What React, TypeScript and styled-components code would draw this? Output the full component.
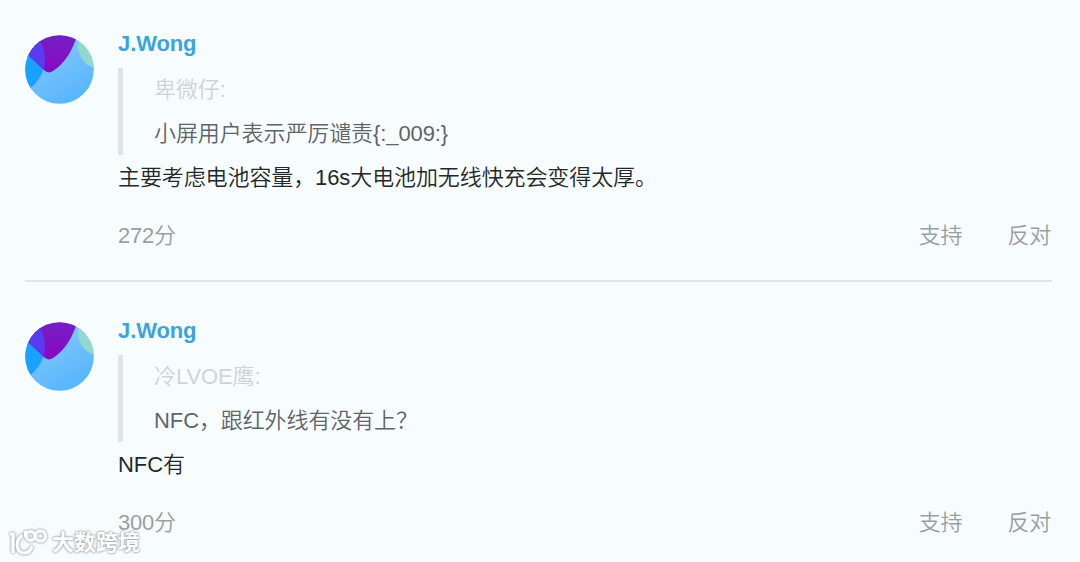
import React from "react";
import styled, { createGlobalStyle } from "styled-components";

interface Comment {
  id: number;
  author: string;
  quoteAuthor: string;
  quoteText: string;
  text: string;
  score: number;
}

const comments: Comment[] = [
  {
    id: 1,
    author: "J.Wong",
    quoteAuthor: "卑微仔",
    quoteText: "小屏用户表示严厉谴责{:_009:}",
    text: "主要考虑电池容量，16s大电池加无线快充会变得太厚。",
    score: 272,
  },
  {
    id: 2,
    author: "J.Wong",
    quoteAuthor: "冷LVOE鹰",
    quoteText: "NFC，跟红外线有没有上？",
    text: "NFC有",
    score: 300,
  },
];

const GlobalStyle = createGlobalStyle`
  * {
    box-sizing: border-box;
  }

  body {
    margin: 0;
    background: #f7fdff;
    font-family: "Liberation Sans", "Noto Sans CJK SC", sans-serif;
    font-size: 22px;
    line-height: 44px;
  }
`;

const Page = styled.main`
  position: relative;
  height: 562px;
  padding: 0 28px 0 25px;
  overflow: hidden;
`;

const CommentItem = styled.article<{ $first: boolean }>`
  display: flex;
  gap: 24px;
  height: ${({ $first }) => ($first ? 282 : 287)}px;
  padding-top: ${({ $first }) => ($first ? 21 : 26)}px;

  &:not(:last-of-type) {
    border-bottom: 2px solid #e0e5e8;
  }
`;

const AvatarImage = styled.svg`
  flex: none;
  width: 69px;
  height: 69px;
  margin-top: 14px;
`;

const Content = styled.div`
  flex: 1;
  min-width: 0;
`;

const Author = styled.div`
  height: 47px;
  padding-top: 1px;
  color: #3ba4dc;
  font-weight: 700;
  letter-spacing: -0.1px;
`;

const Quote = styled.blockquote`
  height: 87px;
  margin: 0;
  padding-left: 31px;
  border-left: 5px solid #e2e3e8;
  color: #5f6468;
`;

const QuoteAuthor = styled.div`
  color: #cfd3d6;
  font-weight: 350;
  letter-spacing: -0.1px;
`;

const QuoteText = styled.div`
  font-weight: 350;
  letter-spacing: -0.1px;
`;

const Text = styled.p`
  margin: 0;
  padding: 1px 0 14px;
  color: #25282b;
  font-weight: 350;
  letter-spacing: -0.1px;
`;

const Footer = styled.footer`
  display: flex;
  align-items: center;
  padding-right: 1px;
  color: #9a9fa2;
  font-weight: 350;
  letter-spacing: -0.2px;
`;

const Score = styled.span`
  flex: 1;
`;

const Actions = styled.div`
  display: flex;
  gap: 45px;
`;

const Action = styled.button`
  padding: 0;
  border: 0;
  background: none;
  color: inherit;
  font: inherit;
  letter-spacing: inherit;
`;

const Watermark = styled.div`
  position: absolute;
  left: 7px;
  bottom: 4px;
  display: flex;
  align-items: center;
  gap: 3px;
  color: #fff;
  font-size: 22px;
  font-weight: 700;
  line-height: 30px;
  text-shadow: 0 0 2px #a0a4a6, 0 0 2px #a8acae, 0 0 3px #b5babc;

  svg {
    width: 42px;
    height: 30px;
    filter: drop-shadow(0 0 1px #a0a4a6) drop-shadow(0 0 1px #c0c4c6);
  }
`;

function Avatar({ id }: { id: number }) {
  return (
    <AvatarImage viewBox="0 0 69 69" aria-hidden="true">
      <defs>
        <linearGradient id={`sky-${id}`} x1="0.3" y1="0.3" x2="0.7" y2="1">
          <stop offset="0" stopColor="#7bc5fb" />
          <stop offset="1" stopColor="#56b4fd" />
        </linearGradient>
        <linearGradient id={`purple-${id}`} x1="0.6" y1="0" x2="0.5" y2="1">
          <stop offset="0" stopColor="#7420c6" />
          <stop offset="1" stopColor="#8a08c0" />
        </linearGradient>
        <clipPath id={`circle-${id}`}>
          <circle cx="34.5" cy="34.5" r="34.3" />
        </clipPath>
        <clipPath id={`petal-${id}`}>
          <path d="M-2 10L14 -2H53C48 15 40 28 28 36C25 38 22 38 19 35L4 21Z" />
        </clipPath>
      </defs>
      <g clipPath={`url(#circle-${id})`}>
        <rect width="69" height="69" fill={`url(#sky-${id})`} />
        <circle cx="76" cy="11" r="23" fill="#93d8cd" />
        <circle cx="-16" cy="24" r="36" fill="#19a2fb" />
        <path
          d="M-2 10L14 -2H53C48 15 40 28 28 36C25 38 22 38 19 35L4 21Z"
          fill={`url(#purple-${id})`}
        />
        <circle
          cx="-16"
          cy="24"
          r="36"
          fill="#5a3cf0"
          clipPath={`url(#petal-${id})`}
        />
      </g>
    </AvatarImage>
  );
}

export default function App() {
  return (
    <>
      <GlobalStyle />
      <Page>
        {comments.map((comment, index) => (
          <CommentItem key={comment.id} $first={index === 0}>
            <Avatar id={comment.id} />
            <Content>
              <Author>{comment.author}</Author>
              <Quote>
                <QuoteAuthor>{comment.quoteAuthor}:</QuoteAuthor>
                <QuoteText>{comment.quoteText}</QuoteText>
              </Quote>
              <Text>{comment.text}</Text>
              <Footer>
                <Score>{comment.score}分</Score>
                <Actions>
                  <Action type="button">支持</Action>
                  <Action type="button">反对</Action>
                </Actions>
              </Footer>
            </Content>
          </CommentItem>
        ))}
        <Watermark>
          <svg viewBox="0 0 42 30" fill="none" stroke="#fff" strokeWidth="3.2">
            <path d="M3 6H6V25" />
            <path d="M15 7L11 12C9 18 11 25 17 25C21 25 24 22 25 18" />
            <path d="M18.5 3V9" />
            <circle cx="23.5" cy="8" r="4.4" />
            <circle cx="33.5" cy="8" r="5" />
          </svg>
          <span>大数跨境</span>
        </Watermark>
      </Page>
    </>
  );
}
